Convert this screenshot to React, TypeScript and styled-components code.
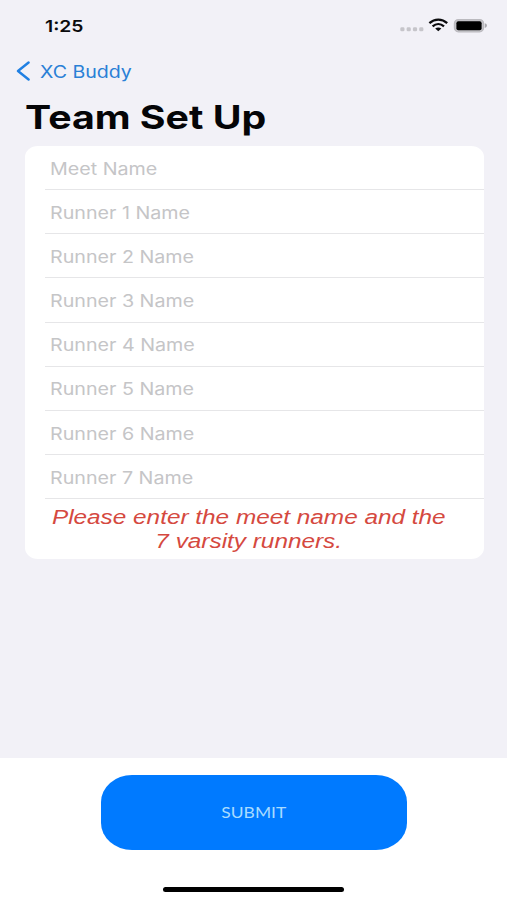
import React from "react";
import styled, { createGlobalStyle } from "styled-components";

const GlobalStyle = createGlobalStyle`
  * { box-sizing: border-box; }
  body { margin: 0; background: #fff; }
`;

const Screen = styled.div`
  width: 507px;
  height: 900px;
  display: flex;
  flex-direction: column;
  overflow: hidden;
  background: #fff;
  font-family: Inter, "Liberation Sans", sans-serif;
`;

const Content = styled.main`
  height: 758px;
  background: #f2f1f7;
`;

const Wide = styled.span<{ $scale: number; $origin?: string }>`
  display: inline-block;
  white-space: nowrap;
  transform: scaleX(${(p) => p.$scale});
  transform-origin: ${(p) => p.$origin ?? "left"} center;
`;

const StatusBar = styled.header`
  height: 52px;
  padding: 0 20px 0 45px;
  display: flex;
  justify-content: space-between;
`;

const Time = styled.div`
  padding-top: 16px;
  font-size: 16.5px;
  line-height: 20px;
  font-weight: 600;
  color: #0b0b0d;
`;

const StatusIcons = styled.svg`
  width: 87px;
  height: 20px;
  margin-top: 16px;
`;

const BackButton = styled.button`
  height: 38px;
  padding: 0 0 0 16px;
  border: 0;
  background: none;
  display: flex;
  align-items: center;
  gap: 10px;
  color: #2a80d6;
  font: 400 17px/20px Inter, "Liberation Sans", sans-serif;
`;

const BackLabel = styled.span`
  padding-top: 2px;
`;

const Title = styled.h1`
  margin: 0;
  height: 56px;
  padding: 7px 0 0 25px;
  font-size: 33px;
  line-height: 40px;
  font-weight: 700;
  color: #050507;
`;

const Card = styled.section`
  width: 459px;
  height: 412.5px;
  margin-left: 25px;
  background: #fff;
  border-radius: 13px / 11px;
`;

const Field = styled.div`
  height: 44.17px;
  margin-left: 20px;
  padding: 2px 0 0 4.5px;
  display: flex;
  align-items: center;
  border-bottom: 1.6px solid #e6e6e8;
  font-size: 17px;
  line-height: 20px;
  color: #c5c5c7;
`;

const Note = styled.p`
  margin: 0;
  padding: 7px 11px 0 0;
  text-align: center;
  font-family: "Liberation Sans", Arial, sans-serif;
  font-size: 20px;
  line-height: 23.5px;
  font-style: italic;
  color: #d5493f;
`;

const NoteLine = styled.span`
  display: flex;
  justify-content: center;
`;

const Footer = styled.footer`
  flex: 1;
  padding-top: 16.5px;
  display: flex;
  flex-direction: column;
  align-items: center;
`;

const SubmitButton = styled.button`
  width: 306px;
  height: 75.5px;
  border: 0;
  padding: 0;
  border-radius: 31px / 27px;
  background: #007aff;
  color: #a9dcff;
  font: 400 16px/20px Lato, sans-serif;
`;

const HomeIndicator = styled.div`
  width: 181px;
  height: 5px;
  margin-top: 37px;
  border-radius: 3px;
  background: #000;
`;

const fields = ["Meet Name", ...[1, 2, 3, 4, 5, 6, 7].map((n) => `Runner ${n} Name`)];

export default function App() {
  return (
    <Screen>
      <GlobalStyle />
      <Content>
        <StatusBar>
          <Time><Wide $scale={1.17}>1:25</Wide></Time>
          <StatusIcons viewBox="0 0 87 20">
            <g fill="#c6c5ca">
              {[0.3, 6.6, 12.9, 19.2].map((x) => (
                <rect key={x} x={x} y="11.3" width="4.2" height="4" rx="1.4" />
              ))}
            </g>
            <g fill="none" stroke="#0b0b0d" strokeWidth="2.3">
              <path d="M29.4 7.1C34.6 2.4 42 2.4 47.2 7.1" />
              <path d="M32.6 10.4C36 7.4 40.6 7.4 44 10.4" />
            </g>
            <path d="M35.2 12.6C37 11.1 39.6 11.1 41.4 12.6L38.3 15.3Z" fill="#0b0b0d" />
            <rect x="54.4" y="3.6" width="29.2" height="12.2" rx="4" fill="#c4c3c8" stroke="#bbbabf" strokeWidth="1.2" />
            <rect x="56.4" y="5.3" width="25.2" height="8.9" rx="2" fill="#000" />
            <path d="M84.8 7.3Q87 7.8 87 9.6T84.8 11.9Z" fill="#aaa9ae" />
          </StatusIcons>
        </StatusBar>
        <BackButton>
          <svg width="14" height="20" viewBox="0 0 14 20" fill="none" stroke="#2080e3" strokeWidth="2.4" strokeLinecap="round" strokeLinejoin="round">
            <path d="M12.6 1.5L2 10L12.6 18.5" />
          </svg>
          <BackLabel><Wide $scale={1.15}>XC Buddy</Wide></BackLabel>
        </BackButton>
        <Title><Wide $scale={1.19}>Team Set Up</Wide></Title>
        <Card>
          {fields.map((f) => (
            <Field key={f}><Wide $scale={1.157}>{f}</Wide></Field>
          ))}
          <Note>
            <NoteLine><Wide $scale={1.217} $origin="center">Please enter the meet name and the</Wide></NoteLine>
            <NoteLine><Wide $scale={1.217} $origin="center">7 varsity runners.</Wide></NoteLine>
          </Note>
        </Card>
      </Content>
      <Footer>
        <SubmitButton><Wide $scale={1.09} $origin="center">SUBMIT</Wide></SubmitButton>
        <HomeIndicator />
      </Footer>
    </Screen>
  );
}
